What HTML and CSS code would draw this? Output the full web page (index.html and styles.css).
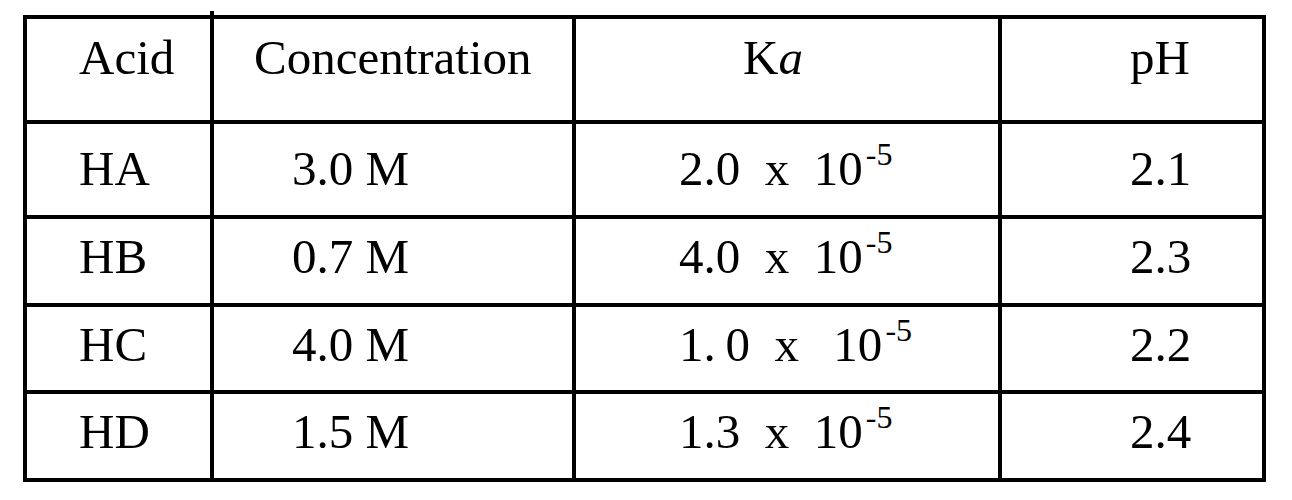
FILE: index.html
```html
<!DOCTYPE html>
<html lang="en">
<head>
  <meta charset="UTF-8">
  <title>Acid table</title>
  <link rel="stylesheet" href="styles.css">
</head>
<body>

  <!-- acid data table -->
  <table class="acids">
    <colgroup>
      <col class="c-acid">
      <col class="c-conc">
      <col class="c-ka">
      <col class="c-ph">
    </colgroup>
    <tr class="head">
      <td class="acid">Acid</td>
      <td class="conc tick-top">Concentration</td>
      <td class="ka">K<i>a</i></td>
      <td class="ph">pH</td>
    </tr>
    <tr class="r1">
      <td class="acid">HA</td>
      <td class="conc">3.0 M</td>
      <td class="ka">2.0  x  10<sup>-5</sup></td>
      <td class="ph">2.1</td>
    </tr>
    <tr class="r2">
      <td class="acid">HB</td>
      <td class="conc">0.7 M</td>
      <td class="ka">4.0  x  10<sup>-5</sup></td>
      <td class="ph">2.3</td>
    </tr>
    <tr class="r3">
      <td class="acid">HC</td>
      <td class="conc">4.0 M</td>
      <td class="ka">1.&thinsp;0  x  &thinsp;10<sup>-5</sup></td>
      <td class="ph">2.2</td>
    </tr>
    <tr class="r4">
      <td class="acid">HD</td>
      <td class="conc">1.5 M</td>
      <td class="ka tick-bottom">1.3  x  10<sup>-5</sup></td>
      <td class="ph tick-bottom">2.4</td>
    </tr>
  </table>

</body>
</html>
```

FILE: styles.css
```css
* {
  margin: 0;
  padding: 0;
  box-sizing: border-box;
}

body {
  background: #fff;
  color: #000;
  font-family: 'Liberation Serif', 'Times New Roman', serif;
  padding: 15px 0 0 23px;
}

.acids {
  border-collapse: collapse;
  table-layout: fixed;
  width: 1239px;
  font-size: 49px;
  line-height: 48px;
}

.c-acid { width: 187px; }
.c-conc { width: 362px; }
.c-ka   { width: 426px; }
.c-ph   { width: 264px; }

.acids td {
  border: 4px solid #000;
  vertical-align: top;
  white-space: pre;
  position: relative;
}

.acids i {
  font-style: italic;
}

.acids sup {
  font-size: 32px;
  line-height: 0;
  vertical-align: 20px;
  margin-left: 3px;
}

/* row heights and text offsets */
.head { height: 105px; }
.r1 { height: 95px; }
.r2 { height: 88px; }
.r3 { height: 87px; }
.r4 { height: 88px; }

.head td { padding-top: 15px; }
.r1 td { padding-top: 21px; }
.r2 td,
.r3 td,
.r4 td { padding-top: 14px; }

/* column offsets */
.acid { padding-left: 52px; }
.conc { padding-left: 78px; }
.ka   { padding-left: 103px; }
.ph   { padding-left: 128px; }

.head .conc { padding-left: 40px; }
.head .ka { padding-left: 167px; }

/* little overhangs of the ruled lines */
.tick-top::before {
  content: "";
  position: absolute;
  left: -4px;
  top: -8px;
  width: 4px;
  height: 6px;
  background: #000;
}

.tick-bottom::after {
  content: "";
  position: absolute;
  left: -4px;
  bottom: -9px;
  width: 4px;
  height: 7px;
  background: #000;
}
```
